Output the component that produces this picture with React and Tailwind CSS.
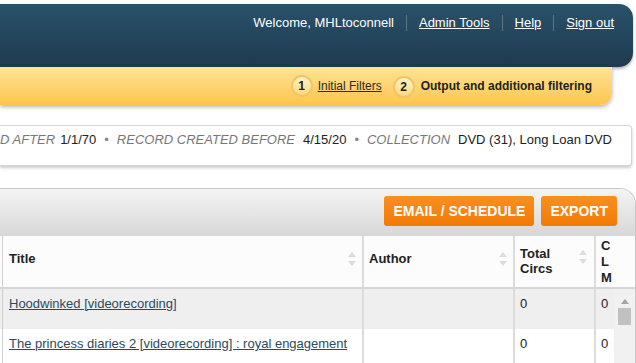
import React from 'react';

const font = { fontFamily: '"Liberation Sans", Arial, sans-serif' };

function SortArrows() {
  return (
    <svg width="10" height="18" viewBox="0 0 10 18" className="shrink-0">
      <path d="M1 7 L5 2 L9 7 Z" fill="#dcdcdc" />
      <path d="M1 11 L5 16 L9 11 Z" fill="#dcdcdc" />
    </svg>
  );
}

function Step({ n }) {
  return (
    <span className="inline-flex h-[22px] w-[22px] items-center justify-center rounded-full border-2 border-[#f3c465] bg-gradient-to-b from-[#fff1c9] to-[#ffd97a] text-[12px] font-bold text-[#222]">
      {n}
    </span>
  );
}

export default function App() {
  const rows = [
    { title: 'Hoodwinked [videorecording]', circs: '0', last: '0', bg: 'bg-[#efefef]' },
    { title: 'The princess diaries 2 [videorecording] : royal engagement', circs: '0', last: '0', bg: 'bg-white' },
  ];

  return (
    <div className="h-[363px] w-[636px] overflow-hidden bg-white" style={font}>
      {/* top header */}
      <div className="mt-[4px] mr-[3px] h-[63px] rounded-br-[14px] rounded-tr-[14px] bg-gradient-to-b from-[#29526b] to-[#1f3a4e] shadow-[0_2px_3px_rgba(0,0,0,0.3)]">
        <div className="flex items-center justify-end pt-[9px] pr-[19px] text-[13px] text-white">
          <span>Welcome, MHLtoconnell</span>
          <span className="mx-[12px] h-[16px] w-px bg-[#5b7486]" />
          <span className="underline">Admin Tools</span>
          <span className="mx-[12px] h-[16px] w-px bg-[#5b7486]" />
          <span className="underline">Help</span>
          <span className="mx-[12px] h-[16px] w-px bg-[#5b7486]" />
          <span className="underline">Sign out</span>
        </div>
      </div>

      {/* steps bar */}
      <div className="mr-[24px] flex h-[38px] items-center justify-end rounded-br-[12px] bg-gradient-to-b from-[#ffe394] to-[#fdc54a] pr-[20px] shadow-[0_2px_4px_rgba(0,0,0,0.3)]">
        <Step n="1" />
        <span className="ml-[5px] text-[12px] text-[#2a2a2a] underline">Initial Filters</span>
        <span className="ml-[11px]"><Step n="2" /></span>
        <span className="ml-[6px] text-[12px] font-bold text-[#222]">Output and additional filtering</span>
      </div>

      {/* filter summary */}
      <div className="mt-[20px] mr-[4px] h-[41px] overflow-hidden rounded-r-[4px] border border-l-0 border-[#d6d6d6] bg-white shadow-[0_2px_3px_rgba(0,0,0,0.2)]">
        <div className="whitespace-nowrap pt-[4px] text-[13px]">
          <span className="italic text-[#777]">D AFTER</span>
          <span className="ml-[5px] text-[#222]">1/1/70</span>
          <span className="mx-[8px] text-[#888]">•</span>
          <span className="italic text-[#777]">RECORD CREATED BEFORE</span>
          <span className="ml-[8px] text-[#222]">4/15/20</span>
          <span className="mx-[8px] text-[#888]">•</span>
          <span className="italic text-[#777]">COLLECTION</span>
          <span className="ml-[8px] text-[#222]">DVD (31), Long Loan DVD</span>
        </div>
      </div>

      {/* results panel */}
      <div className="mt-[22px] rounded-tr-[16px] border-t border-r border-[#c8c8c8] bg-white">
        <div className="flex h-[44px] items-center justify-end gap-[7px] rounded-tr-[16px] bg-gradient-to-b from-[#f4f4f4] to-[#d9d9d9] pr-[18px]">
          <button className="h-[30px] rounded-[3px] bg-gradient-to-b from-[#f98f1e] to-[#f27a03] px-[9px] text-[14px] font-bold text-white">
            EMAIL / SCHEDULE
          </button>
          <button className="h-[30px] rounded-[3px] bg-gradient-to-b from-[#f98f1e] to-[#f27a03] px-[9px] text-[14px] font-bold text-white">
            EXPORT
          </button>
        </div>
        <div className="h-[3px] bg-[#d8d8d8]" />

        {/* header row */}
        <div className="flex h-[53px] border-b-2 border-[#d6d6d6] bg-[#fcfcfc] text-[13px] font-bold text-[#222]">
          <div className="w-[3px] border-r border-[#d0d0d0]" />
          <div className="flex w-[361px] items-center justify-between border-r-2 border-[#dcdcdc] pb-[6px] pl-[6px] pr-[5px]">
            <span>Title</span>
            <SortArrows />
          </div>
          <div className="flex w-[151px] items-center justify-between border-r-2 border-[#dcdcdc] pb-[6px] pl-[5px] pr-[5px]">
            <span>Author</span>
            <SortArrows />
          </div>
          <div className="flex w-[81px] items-start justify-between border-r-2 border-[#dcdcdc] pt-[10px] pl-[5px] pr-[6px] leading-[15px]">
            <span className="leading-[15px]">Total<br />Circs</span>
            <span className="mt-[2px]"><SortArrows /></span>
          </div>
          <div className="w-[20px] overflow-hidden pt-[2px] pl-[5px] leading-[16px]">
            C<br />L<br />M
          </div>
        </div>

        {/* body rows */}
        <div className="flex">
          <div className="w-[615px]">
            {rows.map((r, i) => (
              <div key={i} className={`flex h-[40px] ${r.bg} text-[13px] text-[#222]`}>
                <div className="w-[3px] border-r border-[#d0d0d0]" />
                <div className="w-[361px] border-r-2 border-[#dcdcdc] pt-[5px] pl-[6px]">
                  <span className="text-[#2c4a5e] underline">{r.title}</span>
                </div>
                <div className="w-[151px] border-r-2 border-[#dcdcdc]" />
                <div className="w-[81px] border-r-2 border-[#dcdcdc] pt-[5px] pl-[5px]">{r.circs}</div>
                <div className="flex-1 pt-[5px] pl-[5px]">{r.last}</div>
              </div>
            ))}
          </div>
          <div className="flex w-[21px] flex-col items-center bg-[#f1f1f1] pt-[10px]">
            <svg width="8" height="5" viewBox="0 0 8 5">
              <path d="M0 5 L4 0 L8 5 Z" fill="#a3a3a3" />
            </svg>
            <div className="mt-[4px] h-[17px] w-[13px] bg-[#c1c1c1]" />
          </div>
        </div>
      </div>
    </div>
  );
}
